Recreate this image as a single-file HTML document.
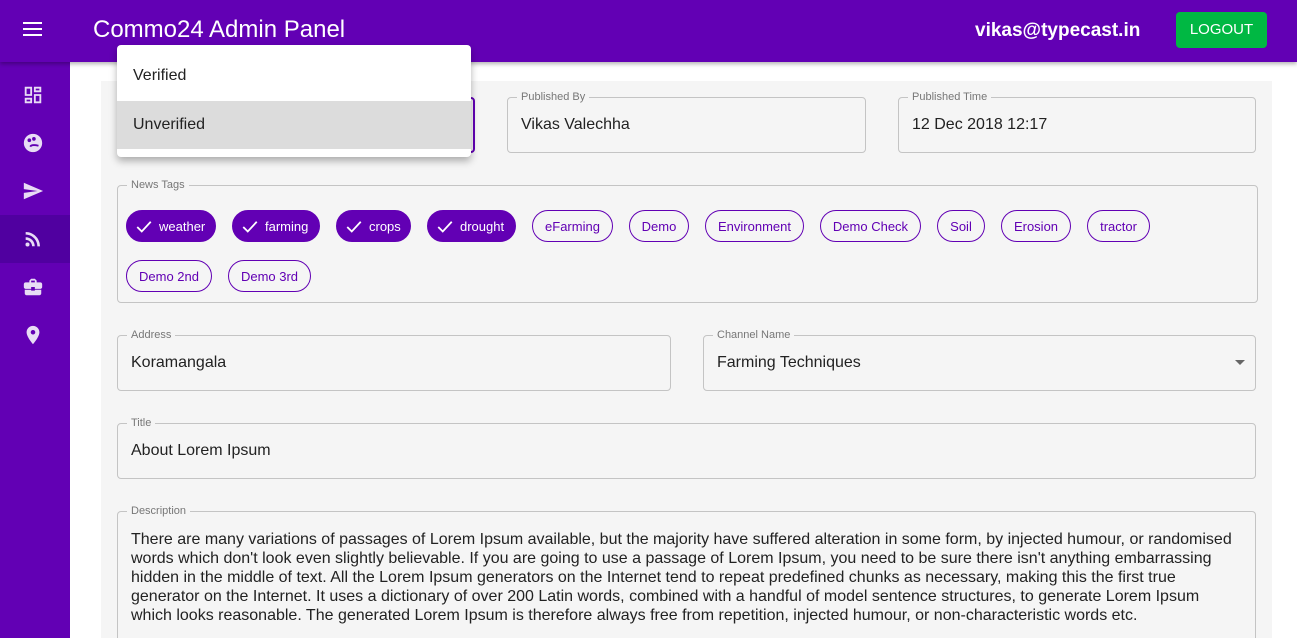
<!DOCTYPE html>
<html style="width:1297px;height:638px;overflow:hidden"><head><meta charset="utf-8"><style>
*{box-sizing:border-box;margin:0;padding:0}
body{width:1297px;height:638px;overflow:hidden;background:#fff;font-family:"Liberation Sans",Arial,sans-serif;position:relative;color:#222}
.hdr{position:absolute;left:0;top:0;width:1297px;height:62px;background:#6200b4;box-shadow:0 2px 4px rgba(0,0,0,.3);z-index:3}
.side{position:absolute;left:0;top:62px;width:70px;height:576px;background:#6200b4;z-index:2}
.card{position:absolute;left:101px;top:81px;width:1171px;height:557px;background:#f5f5f5}
.f{position:absolute;border:1px solid #c4c4c4;border-radius:4px;background:#f5f5f5}
.lbl{position:absolute;top:-7px;left:9px;padding:0 4px;background:#f5f5f5;font-size:11px;color:#777;line-height:12px}
.val{position:absolute;left:13px;top:18px;font-size:16px;color:#222}
.chip{position:absolute;height:32px;border-radius:16px;border:1px solid #6200b4;color:#6200b4;font-size:13px;line-height:31px;text-align:center}
.chip.on{background:#6200b4;color:#fff;text-align:left;padding-left:32px}
.chip.on svg{position:absolute;left:8px;top:7px}
.ic{position:absolute;left:22px;width:22px;height:22px}
</style></head><body>
<div class="hdr">
<svg style="position:absolute;left:23px;top:21px" width="20" height="16"><rect y="1" width="19" height="2" fill="#fff"/><rect y="7" width="19" height="2" fill="#fff"/><rect y="13" width="19" height="2" fill="#fff"/></svg>
<div style="position:absolute;left:93px;top:16px;font-size:24px;color:#fff">Commo24 Admin Panel</div>
<div style="position:absolute;left:975px;top:20px;font-size:19px;font-weight:bold;color:#fff">vikas@typecast.in</div>
<div style="position:absolute;left:1176px;top:12px;width:91px;height:36px;background:#00b843;border-radius:4px;color:#fff;font-size:15px;line-height:36px;text-align:center">LOGOUT</div>
</div>
<div class="side">
<div style="position:absolute;left:0;top:153px;width:70px;height:48px;background:#5000a0"></div>
<svg class="ic" style="top:22px" viewBox="0 0 24 24" fill="#e8dcf5"><path d="M3 13h8V3H3v10zm0 8h8v-6H3v6zm10 0h8V11h-8v10zm0-18v6h8V3h-8z M5 5h4v6H5zM5 17h4v2H5zM15 13h4v6h-4zM15 5h4v2h-4z" fill-rule="evenodd"/></svg>
<svg class="ic" style="top:70px" viewBox="0 0 24 24" fill="#e8dcf5"><circle cx="12" cy="12" r="10"/><circle cx="8" cy="9" r="2" fill="#6200b4"/><circle cx="13" cy="7.5" r="2" fill="#6200b4"/><path d="M9 16c1-2 5-2 9-1" stroke="#6200b4" stroke-width="2" fill="none"/></svg>
<svg class="ic" style="top:118px" viewBox="0 0 24 24" fill="#e8dcf5"><path d="M2 21l21-9L2 3v7l15 2-15 2z"/></svg>
<svg class="ic" style="top:166px" viewBox="0 0 24 24" fill="#e8dcf5"><circle cx="6" cy="18" r="2.2"/><path d="M4 4.4v2.8c7 0 12.8 5.8 12.8 12.8h2.8C19.6 11.4 12.6 4.4 4 4.4zm0 5.7v2.8c3.9 0 7 3.2 7 7h2.9c0-5.5-4.4-9.8-9.9-9.8z"/></svg>
<svg class="ic" style="top:214px" viewBox="0 0 24 24" fill="#e8dcf5"><path d="M10 16v-1H3v4c0 1.1.9 2 2 2h14c1.1 0 2-.9 2-2v-4h-7v1h-4zm10-9h-4V5l-2-2h-4L8 5v2H4c-1.1 0-2 .9-2 2v3c0 1.1.9 2 2 2h6v-2h4v2h6c1.1 0 2-.9 2-2V9c0-1.1-.9-2-2-2zm-6 0h-4V5h4v2z"/></svg>
<svg class="ic" style="top:262px" viewBox="0 0 24 24" fill="#e8dcf5"><path d="M12 2C8.1 2 5 5.1 5 9c0 5.2 7 13 7 13s7-7.8 7-13c0-3.9-3.1-7-7-7zm0 9.5a2.5 2.5 0 110-5 2.5 2.5 0 010 5z"/></svg>
</div>
<div class="card"></div>
<div class="f" style="left:117px;top:97px;width:358px;height:56px;border:2px solid #6200b4"></div>
<div class="f" style="left:507px;top:97px;width:359px;height:56px"><div class="lbl">Published By</div><div class="val">Vikas Valechha</div></div>
<div class="f" style="left:898px;top:97px;width:358px;height:56px"><div class="lbl">Published Time</div><div class="val">12 Dec 2018 12:17</div></div>
<div class="f" style="left:117px;top:185px;width:1141px;height:118px"><div class="lbl">News Tags</div></div>
<div class="chip on" style="left:126px;top:210px;width:90px"><svg width="18" height="18" viewBox="0 0 24 24"><path d="M3 12l6 6L21 5" stroke="#fff" stroke-width="2.4" fill="none"/></svg>weather</div>
<div class="chip on" style="left:232px;top:210px;width:88px"><svg width="18" height="18" viewBox="0 0 24 24"><path d="M3 12l6 6L21 5" stroke="#fff" stroke-width="2.4" fill="none"/></svg>farming</div>
<div class="chip on" style="left:336px;top:210px;width:75px"><svg width="18" height="18" viewBox="0 0 24 24"><path d="M3 12l6 6L21 5" stroke="#fff" stroke-width="2.4" fill="none"/></svg>crops</div>
<div class="chip on" style="left:427px;top:210px;width:89px"><svg width="18" height="18" viewBox="0 0 24 24"><path d="M3 12l6 6L21 5" stroke="#fff" stroke-width="2.4" fill="none"/></svg>drought</div>
<div class="chip" style="left:532px;top:210px;width:81px">eFarming</div>
<div class="chip" style="left:629px;top:210px;width:60px">Demo</div>
<div class="chip" style="left:705px;top:210px;width:99px">Environment</div>
<div class="chip" style="left:820px;top:210px;width:101px">Demo Check</div>
<div class="chip" style="left:937px;top:210px;width:48px">Soil</div>
<div class="chip" style="left:1001px;top:210px;width:70px">Erosion</div>
<div class="chip" style="left:1087px;top:210px;width:63px">tractor</div>
<div class="chip" style="left:126px;top:260px;width:86px">Demo 2nd</div>
<div class="chip" style="left:228px;top:260px;width:83px">Demo 3rd</div>
<div class="f" style="left:117px;top:335px;width:554px;height:56px"><div class="lbl">Address</div><div class="val">Koramangala</div></div>
<div class="f" style="left:703px;top:335px;width:553px;height:56px"><div class="lbl">Channel Name</div><div class="val">Farming Techniques</div><svg style="position:absolute;right:8px;top:24px" width="12" height="6"><path d="M0 0h10L5 5z" fill="#666"/></svg></div>
<div class="f" style="left:117px;top:423px;width:1139px;height:56px"><div class="lbl">Title</div><div class="val">About Lorem Ipsum</div></div>
<div class="f" style="left:117px;top:511px;width:1139px;height:127px;border-bottom:none;border-radius:4px 4px 0 0"><div class="lbl">Description</div><div style="position:absolute;left:13px;top:18px;width:1110px;font-size:16px;line-height:19px;color:#222">There are many variations of passages of Lorem Ipsum available, but the majority have suffered alteration in some form, by injected humour, or randomised words which don't look even slightly believable. If you are going to use a passage of Lorem Ipsum, you need to be sure there isn't anything embarrassing hidden in the middle of text. All the Lorem Ipsum generators on the Internet tend to repeat predefined chunks as necessary, making this the first true generator on the Internet. It uses a dictionary of over 200 Latin words, combined with a handful of model sentence structures, to generate Lorem Ipsum which looks reasonable. The generated Lorem Ipsum is therefore always free from repetition, injected humour, or non-characteristic words etc.</div></div>
<div style="position:absolute;left:117px;top:45px;width:354px;height:112px;background:#fff;border-radius:4px;box-shadow:0 4px 8px rgba(0,0,0,.3);z-index:5">
<div style="position:absolute;left:16px;top:22px;font-size:16px">Verified</div>
<div style="position:absolute;left:0;top:56px;width:354px;height:48px;background:#dcdcdc"><div style="position:absolute;left:16px;top:15px;font-size:16px">Unverified</div></div>
</div>
</body></html>
